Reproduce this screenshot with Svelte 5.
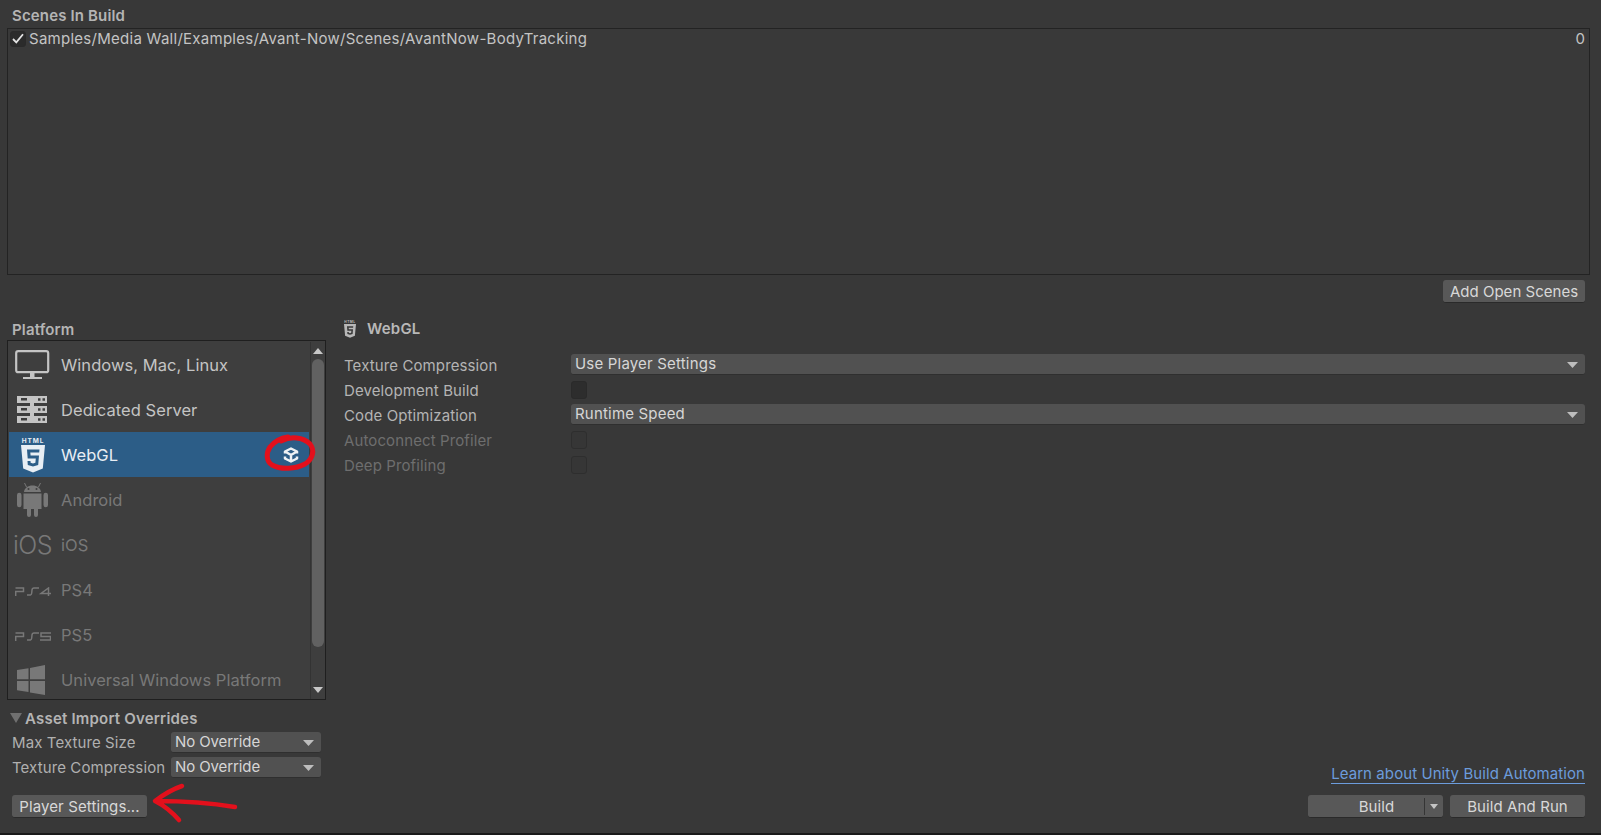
<script lang="ts">
  const platforms = [
    { id: 'desktop', name: 'Windows, Mac, Linux' },
    { id: 'server', name: 'Dedicated Server' },
    { id: 'webgl', name: 'WebGL', selected: true },
    { id: 'android', name: 'Android', off: true },
    { id: 'ios', name: 'iOS', off: true },
    { id: 'ps4', name: 'PS4', off: true },
    { id: 'ps5', name: 'PS5', off: true },
    { id: 'uwp', name: 'Universal Windows Platform', off: true }
  ];
</script>

{#snippet html5(w, h)}
  <svg width={w} height={h} viewBox="0 0 24 36">
    <text x="12" y="5.500" text-anchor="middle" font-size="6.500" font-weight="700" letter-spacing=".9" fill="currentColor" font-family="Inter, sans-serif">HTML</text>
    <path fill="currentColor" fill-rule="evenodd" d="M0 8h24l-2.200 23.500L12 35.500 2.200 31.500zM6 12.500h12.500l-.3 3H9.300l.3 3H18l-.8 9.500L12 29.500 6.800 28l-.3-4h3l.1 1.700 2.400.8 2.400-.8.400-4.200H6.700z" />
  </svg>
{/snippet}

{#snippet chevron()}
  <svg class="chev" width="11" height="6" viewBox="0 0 11 6"><path d="M0 0h11L5.500 6z" fill="currentColor" /></svg>
{/snippet}

<div class="window">
  <section class="scenes">
    <h2>Scenes In Build</h2>
    <div class="scene-list">
      <div class="scene-row">
        <span class="check">
          <svg width="12" height="11" viewBox="0 0 12 11"><path d="M1 6l3.300 3.300L11 1.200" fill="none" stroke="#e4e4e4" stroke-width="1.800" /></svg>
        </span>
        <span class="scene-name">Samples/Media Wall/Examples/Avant-Now/Scenes/AvantNow-BodyTracking</span>
        <span class="scene-index">0</span>
      </div>
    </div>
    <div class="scene-actions"><button class="btn add">Add Open Scenes</button></div>
  </section>

  <div class="main">
    <div class="left">
      <h2 class="platform-title">Platform</h2>
      <div class="platform-box">
        <ul class="platforms">
          {#each platforms as p}
            <li class:selected={p.selected} class:off={p.off}>
              <span class="picon">
                {#if p.id === 'desktop'}
                  <svg width="36" height="30" viewBox="0 0 36 30">
                    <rect x="1.200" y="1.200" width="32" height="21" rx="2" fill="none" stroke="currentColor" stroke-width="2.200" />
                    <path d="M15 23h4.500v4H15zM8 27h19v2H8z" fill="currentColor" />
                  </svg>
                {:else if p.id === 'server'}
                  <svg width="31" height="30" viewBox="0 0 31 30">
                    <path fill="currentColor" fill-rule="evenodd" d="M0 1h30v7H0zM4 3v2.500h6V3zM21 3.200v2.500h2.500V3.200zM25.500 3.200v2.500H28V3.200zM0 11h30v7H0zM4 13v2.500h6V13zM21 13.200v2.500h2.500v-2.500zM25.500 13.200v2.500H28v-2.500zM0 21h30v7H0zM4 23v2.500h6V23zM21 23.200v2.500h2.500v-2.500zM25.500 23.200v2.500H28v-2.500z" />
                    <path fill="currentColor" d="M13 8h4v3h-4zM13 18h4v3h-4z" />
                  </svg>
                {:else if p.id === 'webgl'}
                  {@render html5(24, 36)}
                {:else if p.id === 'android'}
                  <svg width="31" height="35" viewBox="0 0 31 35">
                    <path fill="currentColor" d="M7 10c.5-4 4-6.500 8.500-6.500S23.500 6 24 10zM6.500 11.500h18V27h-3.500v6a2 2 0 0 1-4 0v-6h-3v6a2 2 0 0 1-4 0v-6H6.500zM0 13a2 2 0 0 1 4.500 0v10a2 2 0 0 1-4.500 0zM26.500 13a2 2 0 0 1 4.500 0v10a2 2 0 0 1-4.500 0z" />
                    <path stroke="currentColor" stroke-width="1" d="M9.500 5L7.500 1M21.500 5l2-4" />
                    <circle cx="11.500" cy="7" r="1" fill="#3e3e3e" /><circle cx="19.500" cy="7" r="1" fill="#3e3e3e" />
                  </svg>
                {:else if p.id === 'ios'}
                  <span class="ios-mark">iOS</span>
                {:else if p.id === 'ps4' || p.id === 'ps5'}
                  <svg class="ps-mark" width="36" height="9" viewBox="0 0 36 9">
                    <path fill="none" stroke="currentColor" stroke-width="1.500" d="M0 4.500h8.500V1H.5M.7 9V4.500M12 8h3.500q1-.2 1.200-2l.3-3q.2-2 2-2H24" />
                    {#if p.id === 'ps4'}
                      <path fill="none" stroke="currentColor" stroke-width="1.500" d="M33.500 9V1L26 6.500h10" />
                    {:else}
                      <path fill="none" stroke="currentColor" stroke-width="1.500" d="M36 1H26v3.500h9.500V8H25" />
                    {/if}
                  </svg>
                {:else}
                  <svg class="uwp-mark" width="28" height="30" viewBox="0 0 28 30">
                    <path fill="currentColor" d="M0 5l11.500-1.700v11H0zM13 3L28 0v14.300H13zM0 16h11.500v11L0 25.200zM13 16h15v14l-15-2.600z" />
                  </svg>
                {/if}
              </span>
              <span class="pname">{p.name}</span>
              {#if p.selected}
                <svg class="unity" width="16" height="16" viewBox="0 0 16 16">
                  <path fill="none" stroke="#eef2f5" stroke-width="2.500" stroke-linejoin="round" d="M2 6.500V4.500L8 1.500l6 3v2M2 9.500v2l6 3 6-3v-2M2 4.500L8 8l6-3.500M8 8v6.500" />
                </svg>
              {/if}
            </li>
          {/each}
        </ul>
        <div class="scrollbar">
          <svg width="10" height="6" viewBox="0 0 10 6"><path d="M0 6h10L5 0z" fill="#c8c8c8" /></svg>
          <div class="track"><div class="thumb"></div></div>
          <svg width="10" height="6" viewBox="0 0 10 6"><path d="M0 0h10L5 6z" fill="#c8c8c8" /></svg>
        </div>
      </div>

      <div class="overrides">
        <div class="overrides-title">
          <svg width="12" height="10" viewBox="0 0 12 10"><path d="M0 0h12L6 10z" fill="#707070" /></svg>
          <strong>Asset Import Overrides</strong>
        </div>
        <div class="override-row"><span>Max Texture Size</span><div class="select small">No Override{@render chevron()}</div></div>
        <div class="override-row"><span>Texture Compression</span><div class="select small">No Override{@render chevron()}</div></div>
      </div>
      <button class="btn player">Player Settings...</button>
    </div>

    <div class="right">
      <div class="settings-head">
        <span class="head-icon">{@render html5(12, 18)}</span>
        <strong>WebGL</strong>
      </div>
      <div class="settings">
        <span class="label">Texture Compression</span>
        <div class="select">Use Player Settings{@render chevron()}</div>
        <span class="label">Development Build</span>
        <span class="box"></span>
        <span class="label">Code Optimization</span>
        <div class="select">Runtime Speed{@render chevron()}</div>
        <span class="label off">Autoconnect Profiler</span>
        <span class="box off"></span>
        <span class="label off">Deep Profiling</span>
        <span class="box off"></span>
      </div>
      <div class="footer">
        <span class="link">Learn about Unity Build Automation</span>
        <div class="build-row">
          <div class="btn build">
            <span class="build-label">Build</span>
            <span class="build-arrow"><svg width="8" height="5" viewBox="0 0 8 5"><path d="M0 0h8L4 5z" fill="#c4c4c4" /></svg></span>
          </div>
          <button class="btn run">Build And Run</button>
        </div>
      </div>
    </div>
  </div>

  <!-- red markup drawn over the screenshot -->
  <svg class="markup" width="1601" height="835" viewBox="0 0 1601 835">
    <path d="M281 441c10-5 22-4 29 3 5 6 3 15-5 20-9 5-24 6-33 1-6-4-6-12-2-18 4-5 11-9 18-10" fill="none" stroke="#e3101c" stroke-width="5" stroke-linecap="round" />
    <path d="M182 786c-9 3-19 9-27 15 8 4 17 11 24 19M156 801c25 0 55 2 79 6" fill="none" stroke="#e3101c" stroke-width="4.500" stroke-linecap="round" stroke-linejoin="round" />
  </svg>
</div>

<style>
  :global(body) { margin: 0; background: #383838; color: #c4c4c4; font-family: Inter, "Noto Sans", sans-serif; font-size: 15px; overflow: hidden; }
  .window { position: relative; box-sizing: border-box; height: 835px; display: flex; flex-direction: column; padding: 0 11px 0 7px; border-bottom: 2px solid #191919; background: #383838; }
  h2 { margin: 0; font-size: 15px; font-weight: 600; color: #b4b4b4; line-height: 32px; padding-left: 5px; height: 28px; letter-spacing: .15px; }
  .scene-list { box-sizing: border-box; height: 247px; border: 1px solid #232323; background: #393939; padding: 1px 2px 0 2px; }
  .scene-row { display: flex; align-items: center; height: 17px; }
  .check { box-sizing: border-box; width: 16px; height: 16px; margin-right: 3px; display: flex; align-items: center; justify-content: center; border: 1px solid #2a2a2a; border-radius: 3px; background: #2b2b2b; }
  .scene-name { flex: 1; letter-spacing: .27px; }
  .scene-index { margin-right: 2px; }
  .scene-actions { display: flex; justify-content: flex-end; padding: 5px 5px 0 0; height: 27px; }
  .btn { box-sizing: border-box; height: 23px; border: 0; border-bottom: 1px solid #2a2a2a; border-radius: 3px; background: #585858; color: #d8d8d8; font: inherit; padding: 0; letter-spacing: .1px; }
  .add { width: 142px; letter-spacing: .02px; }
  .main { flex: 1; display: grid; grid-template-columns: 319px 1fr; column-gap: 18px; padding-right: 5px; padding-top: 9px; }
  .left { display: flex; flex-direction: column; }
  .platform-title { height: 24px; line-height: 27px; }
  .platform-box { box-sizing: border-box; height: 360px; display: flex; border: 1px solid #1f1f1f; background: #3e3e3e; overflow: hidden; padding-top: 1px; }
  .platforms { flex: 0 0 300px; margin: 0 0 0 1px; padding: 0; list-style: none; }
  .platforms li { position: relative; display: flex; align-items: center; height: 45px; color: #c4c4c4; font-size: 16.500px; letter-spacing: .05px; }
  .platforms li.selected { background: #2c5d87; color: #e8eef4; }
  .platforms li.off { color: #787878; }
  .picon { flex: 0 0 52px; display: flex; align-items: center; justify-content: center; padding-right: 5px; box-sizing: border-box; }
  .uwp-mark { margin-right: 3px; }
  .ps-mark { margin-top: 4px; }
  .pname { flex: 1; }
  .ios-mark { font-size: 25px; font-weight: 300; letter-spacing: -.5px; color: #787878; }
  .unity { margin-right: 10px; }
  .scrollbar { flex: 1; margin-left: 1px; display: flex; flex-direction: column; align-items: center; border-left: 1px solid #333; padding-top: 6px; }
  .track { flex: 1; width: 100%; padding: 5px 1px 0 1px; box-sizing: border-box; }
  .thumb { height: 288px; border-radius: 6px; background: #616161; }
  .scrollbar > svg:last-child { margin-bottom: 6px; }
  .overrides { padding-top: 6px; }
  .overrides-title { height: 24px; display: flex; align-items: center; gap: 3px; padding-left: 3px; color: #b4b4b4; letter-spacing: .2px; }
  .overrides-title strong { font-weight: 600; }
  .override-row { display: flex; align-items: center; justify-content: space-between; height: 25px; padding: 0 5px; letter-spacing: .1px; color: #b0b0b0; white-space: nowrap; }
  .select { box-sizing: border-box; position: relative; height: 21px; line-height: 20px; padding-left: 4px; border-radius: 3px; border-bottom: 1px solid #2f2f2f; background: #515151; color: #d6d6d6; letter-spacing: .19px; }
  .select.small { width: 150px; flex: none; padding-left: 4px; letter-spacing: -.1px; }
  .chev { position: absolute; right: 7px; top: 8px; color: #bdbdbd; }
  .player { align-self: flex-start; width: 135px; margin: 15px 0 0 5px; }
  .right { display: flex; flex-direction: column; }
  .settings-head { height: 24px; display: flex; align-items: center; gap: 11px; color: #b8b8b8; letter-spacing: .2px; box-sizing: border-box; padding-top: 1px; }
  .settings-head strong { font-weight: 600; }
  .head-icon { color: #b8b8b8; display: flex; }
  .settings { display: grid; grid-template-columns: 227px 1fr; grid-auto-rows: 25px; align-items: center; padding-top: 12px; }
  .settings .label { letter-spacing: .11px; color: #b4b4b4; padding-top: 2px; }
  .settings .label.off { color: #6e6e6e; }
  .box { box-sizing: border-box; width: 16px; height: 18px; border: 1px solid #2a2a2a; border-radius: 3px; background: #2d2d2d; }
  .box.off { background: #363636; border-color: #2e2e2e; }
  .footer { margin-top: auto; display: flex; flex-direction: column; align-items: flex-end; padding-bottom: 15px; }
  .link { color: #6c9cdc; letter-spacing: .08px; line-height: 18px; border-bottom: 1px solid #6c9cdc; margin-bottom: 11px; }
  .build-row { display: flex; gap: 7px; }
  .build { display: flex; align-items: center; width: 135px; }
  .build-label { flex: 1; text-align: center; padding-left: 21px; box-sizing: border-box; }
  .build-arrow { flex: none; width: 18px; height: 17px; display: flex; align-items: center; justify-content: center; border-left: 1px solid #353535; }
  .run { width: 135px; }
  .markup { position: absolute; inset: 0; pointer-events: none; }
</style>
